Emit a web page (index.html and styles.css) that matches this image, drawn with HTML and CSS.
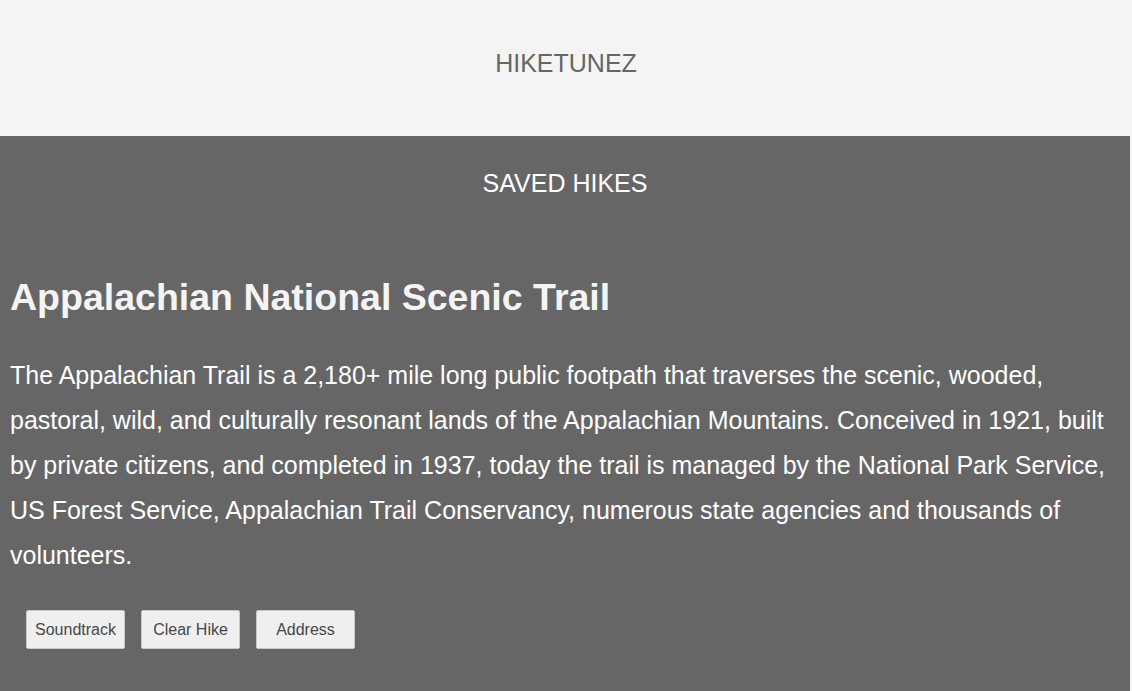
FILE: index.html
```html
<!DOCTYPE html>
<html lang="en">
<head>
<meta charset="utf-8">
<title>HikeTunez</title>
<link rel="stylesheet" href="styles.css">
</head>
<body>
<header class="site-header">
  <div class="brand">HIKETUNEZ</div>
</header>
<main class="saved">
  <h2 class="saved-title">SAVED HIKES</h2>
  <article class="hike">
    <h1 class="hike-name">Appalachian National Scenic Trail</h1>
    <p class="hike-desc">The Appalachian Trail is a 2,180+ mile long public footpath that traverses the scenic, wooded, pastoral, wild, and culturally resonant lands of the Appalachian Mountains. Conceived in 1921, built by private citizens, and completed in 1937, today the trail is managed by the National Park Service, US Forest Service, Appalachian Trail Conservancy, numerous state agencies and thousands of volunteers.</p>
    <div class="actions">
      <button class="btn" type="button">Soundtrack</button>
      <button class="btn" type="button">Clear Hike</button>
      <button class="btn" type="button">Address</button>
    </div>
  </article>
</main>
</body>
</html>
```
FILE: styles.css
```css
* { box-sizing: border-box; }
html, body {
  margin: 0;
  padding: 0;
  background: #f4f4f4;
  font-family: "Liberation Sans", Arial, Helvetica, sans-serif;
}
.site-header {
  height: 136px;
  background: #f4f4f4;
  display: flex;
  align-items: center;
  justify-content: center;
}
.brand {
  font-size: 25px;
  line-height: 28px;
  color: #666666;
  margin-bottom: 11px;
}
.saved {
  background: #666666;
  margin-right: 2px;
  padding: 33px 10px 43px 10px;
  min-height: 555px;
}
.saved-title {
  margin: 0;
  text-align: center;
  font-size: 25px;
  line-height: 28px;
  font-weight: normal;
  color: #ffffff;
}
.hike { margin-top: 78px; }
.hike-name {
  margin: 0;
  font-size: 37.5px;
  line-height: 44px;
  font-weight: bold;
  color: #f4f4f4;
}
.hike-desc {
  margin: 34px 0 0 0;
  font-size: 25px;
  line-height: 45px;
  color: #ffffff;
}
.actions {
  display: flex;
  gap: 16px;
  margin-top: 32px;
  padding-left: 16px;
}
.btn {
  width: 99px;
  height: 39px;
  padding: 0;
  background: #efefef;
  border: 1px solid #c8c8c8;
  border-radius: 2px;
  font-family: "Liberation Sans", Arial, Helvetica, sans-serif;
  font-size: 16px;
  color: #474747;
}
```
